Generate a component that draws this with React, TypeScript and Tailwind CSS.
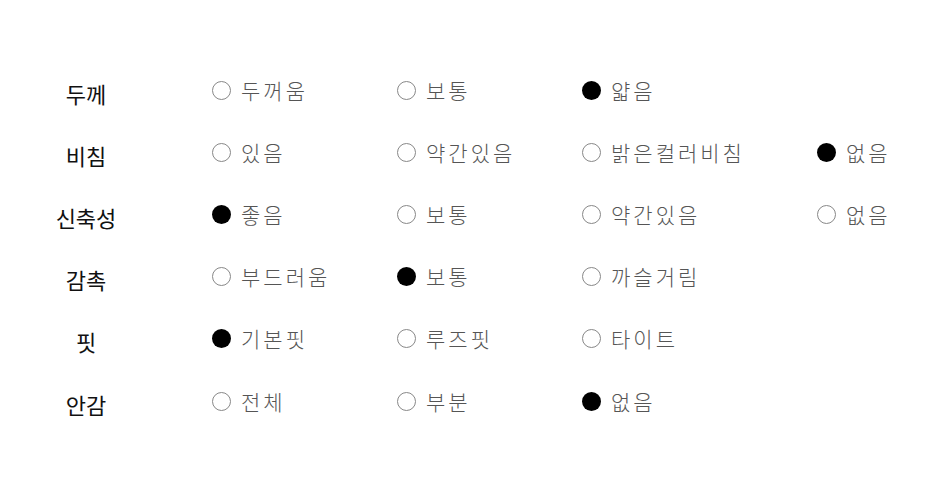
const rows: { label: string; options: string[]; selected: number }[] = [
  { label: '두께', options: ['두꺼움', '보통', '얇음'], selected: 2 },
  { label: '비침', options: ['있음', '약간있음', '밝은컬러비침', '없음'], selected: 3 },
  { label: '신축성', options: ['좋음', '보통', '약간있음', '없음'], selected: 0 },
  { label: '감촉', options: ['부드러움', '보통', '까슬거림'], selected: 1 },
  { label: '핏', options: ['기본핏', '루즈핏', '타이트'], selected: 0 },
  { label: '안감', options: ['전체', '부분', '없음'], selected: 2 },
]

const colW = ['w-[185px]', 'w-[185px]', 'w-[235px]', 'w-[120px]']

export default function App() {
  return (
    <div
      className="w-[950px] h-[495px] bg-white pt-[59px] pl-[40px]"
      style={{ fontFamily: '"Noto Sans CJK KR", "Noto Sans", sans-serif' }}
    >
      {rows.map(row => (
        <div key={row.label} className="flex items-center h-[62.2px]">
          <div className="w-[92px] pt-[6px] text-center text-[22px] font-normal text-[#111]">
            {row.label}
          </div>
          <div className="flex ml-[80px]">
            {row.options.map((opt, i) => (
              <div key={opt + i} className={`${colW[i]} flex items-center`}>
                {i === row.selected ? (
                  <span className="w-[19px] h-[19px] rounded-full bg-black shrink-0" />
                ) : (
                  <span className="w-[19px] h-[19px] rounded-full border border-[#888] shrink-0" />
                )}
                <span className="ml-[10px] text-[21px] tracking-[3px] font-light text-[#555] leading-none">{opt}</span>
              </div>
            ))}
          </div>
        </div>
      ))}
    </div>
  )
}
